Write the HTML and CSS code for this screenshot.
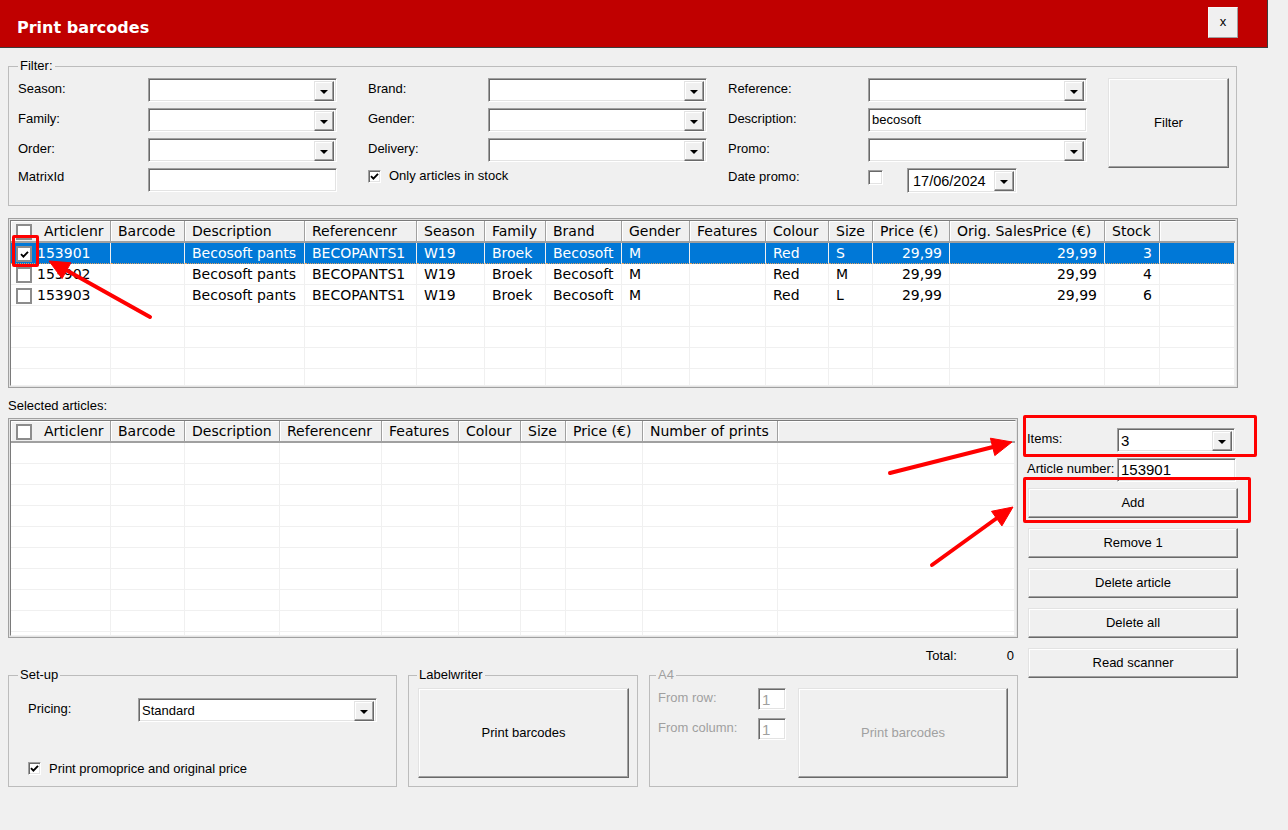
FILE: index.html
```html
<!DOCTYPE html>
<html lang="en">
<head>
<meta charset="utf-8">
<title>Print barcodes</title>
<link rel="stylesheet" href="styles.css">
</head>
<body>
<div class="window">
  <header class="titlebar">
    <h1 class="title">Print barcodes</h1>
    <button class="close" type="button">x</button>
  </header>

  <main class="content">
    <fieldset class="group filter">
      <legend>Filter:</legend>
      <div class="filter-grid">
        <button class="btn filter-btn" type="button">Filter</button>

        <span class="lbl c1">Season:</span>
        <div class="combo c2"><span class="val"></span><span class="drop"><i></i></span></div>
        <span class="lbl c4">Brand:</span>
        <div class="combo c5"><span class="val"></span><span class="drop"><i></i></span></div>
        <span class="lbl c7">Reference:</span>
        <div class="combo c8"><span class="val"></span><span class="drop"><i></i></span></div>

        <span class="lbl c1">Family:</span>
        <div class="combo c2"><span class="val"></span><span class="drop"><i></i></span></div>
        <span class="lbl c4">Gender:</span>
        <div class="combo c5"><span class="val"></span><span class="drop"><i></i></span></div>
        <span class="lbl c7">Description:</span>
        <div class="textbox c8">becosoft</div>

        <span class="lbl c1">Order:</span>
        <div class="combo c2"><span class="val"></span><span class="drop"><i></i></span></div>
        <span class="lbl c4">Delivery:</span>
        <div class="combo c5"><span class="val"></span><span class="drop"><i></i></span></div>
        <span class="lbl c7">Promo:</span>
        <div class="combo c8"><span class="val"></span><span class="drop"><i></i></span></div>

        <span class="lbl c1 low">MatrixId</span>
        <div class="textbox c2"></div>
        <label class="check-line c4 span3"><span class="chk"><svg viewBox="0 0 9 9" width="9" height="9"><polyline points="1,4.2 3.4,6.6 8,1.8" /></svg></span><span class="check-text">Only articles in stock</span></label>
        <span class="lbl c7 low">Date promo:</span>
        <div class="date-line c8">
          <span class="chk chk-empty"></span>
          <div class="datepicker"><span class="val">17/06/2024</span><span class="drop"><i></i></span></div>
        </div>
      </div>
    </fieldset>

    <div class="grid grid-articles">
      <div class="grid-inner">
        <div class="row head">
          <div class="hcell first"><span class="gchk"></span><span>Articlenr</span></div>
          <div class="hcell">Barcode</div>
          <div class="hcell">Description</div>
          <div class="hcell">Referencenr</div>
          <div class="hcell">Season</div>
          <div class="hcell">Family</div>
          <div class="hcell">Brand</div>
          <div class="hcell">Gender</div>
          <div class="hcell">Features</div>
          <div class="hcell">Colour</div>
          <div class="hcell">Size</div>
          <div class="hcell">Price (€)</div>
          <div class="hcell">Orig. SalesPrice (€)</div>
          <div class="hcell">Stock</div>
          <div class="hcell filler"></div>
        </div>
        <div class="row sel">
          <div class="cell first"><span class="gchk"><svg viewBox="0 0 9 9" width="9" height="9"><polyline points="1,4.2 3.4,6.6 8,1.8" /></svg></span><span>153901</span></div>
          <div class="cell"></div>
          <div class="cell">Becosoft pants</div>
          <div class="cell">BECOPANTS1</div>
          <div class="cell">W19</div>
          <div class="cell">Broek</div>
          <div class="cell">Becosoft</div>
          <div class="cell">M</div>
          <div class="cell"></div>
          <div class="cell">Red</div>
          <div class="cell">S</div>
          <div class="cell num">29,99</div>
          <div class="cell num">29,99</div>
          <div class="cell num">3</div>
          <div class="cell"></div>
        </div>
        <div class="row">
          <div class="cell first"><span class="gchk"></span><span>153902</span></div>
          <div class="cell"></div>
          <div class="cell">Becosoft pants</div>
          <div class="cell">BECOPANTS1</div>
          <div class="cell">W19</div>
          <div class="cell">Broek</div>
          <div class="cell">Becosoft</div>
          <div class="cell">M</div>
          <div class="cell"></div>
          <div class="cell">Red</div>
          <div class="cell">M</div>
          <div class="cell num">29,99</div>
          <div class="cell num">29,99</div>
          <div class="cell num">4</div>
          <div class="cell"></div>
        </div>
        <div class="row">
          <div class="cell first"><span class="gchk"></span><span>153903</span></div>
          <div class="cell"></div>
          <div class="cell">Becosoft pants</div>
          <div class="cell">BECOPANTS1</div>
          <div class="cell">W19</div>
          <div class="cell">Broek</div>
          <div class="cell">Becosoft</div>
          <div class="cell">M</div>
          <div class="cell"></div>
          <div class="cell">Red</div>
          <div class="cell">L</div>
          <div class="cell num">29,99</div>
          <div class="cell num">29,99</div>
          <div class="cell num">6</div>
          <div class="cell"></div>
        </div>
        <div class="row"><div class="cell"></div><div class="cell"></div><div class="cell"></div><div class="cell"></div><div class="cell"></div><div class="cell"></div><div class="cell"></div><div class="cell"></div><div class="cell"></div><div class="cell"></div><div class="cell"></div><div class="cell"></div><div class="cell"></div><div class="cell"></div><div class="cell"></div></div>
        <div class="row"><div class="cell"></div><div class="cell"></div><div class="cell"></div><div class="cell"></div><div class="cell"></div><div class="cell"></div><div class="cell"></div><div class="cell"></div><div class="cell"></div><div class="cell"></div><div class="cell"></div><div class="cell"></div><div class="cell"></div><div class="cell"></div><div class="cell"></div></div>
        <div class="row"><div class="cell"></div><div class="cell"></div><div class="cell"></div><div class="cell"></div><div class="cell"></div><div class="cell"></div><div class="cell"></div><div class="cell"></div><div class="cell"></div><div class="cell"></div><div class="cell"></div><div class="cell"></div><div class="cell"></div><div class="cell"></div><div class="cell"></div></div>
        <div class="row"><div class="cell"></div><div class="cell"></div><div class="cell"></div><div class="cell"></div><div class="cell"></div><div class="cell"></div><div class="cell"></div><div class="cell"></div><div class="cell"></div><div class="cell"></div><div class="cell"></div><div class="cell"></div><div class="cell"></div><div class="cell"></div><div class="cell"></div></div>
      </div>
    </div>

    <div class="lower">
      <div class="lower-left">
        <div class="sel-label">Selected articles:</div>
        <div class="grid grid-selected">
          <div class="grid-inner">
            <div class="row head">
              <div class="hcell first"><span class="gchk"></span><span>Articlenr</span></div>
              <div class="hcell">Barcode</div>
              <div class="hcell">Description</div>
              <div class="hcell">Referencenr</div>
              <div class="hcell">Features</div>
              <div class="hcell">Colour</div>
              <div class="hcell">Size</div>
              <div class="hcell">Price (€)</div>
              <div class="hcell">Number of prints</div>
              <div class="hcell filler"></div>
            </div>
            <div class="row"><div class="cell"></div><div class="cell"></div><div class="cell"></div><div class="cell"></div><div class="cell"></div><div class="cell"></div><div class="cell"></div><div class="cell"></div><div class="cell"></div><div class="cell"></div></div>
            <div class="row"><div class="cell"></div><div class="cell"></div><div class="cell"></div><div class="cell"></div><div class="cell"></div><div class="cell"></div><div class="cell"></div><div class="cell"></div><div class="cell"></div><div class="cell"></div></div>
            <div class="row"><div class="cell"></div><div class="cell"></div><div class="cell"></div><div class="cell"></div><div class="cell"></div><div class="cell"></div><div class="cell"></div><div class="cell"></div><div class="cell"></div><div class="cell"></div></div>
            <div class="row"><div class="cell"></div><div class="cell"></div><div class="cell"></div><div class="cell"></div><div class="cell"></div><div class="cell"></div><div class="cell"></div><div class="cell"></div><div class="cell"></div><div class="cell"></div></div>
            <div class="row"><div class="cell"></div><div class="cell"></div><div class="cell"></div><div class="cell"></div><div class="cell"></div><div class="cell"></div><div class="cell"></div><div class="cell"></div><div class="cell"></div><div class="cell"></div></div>
            <div class="row"><div class="cell"></div><div class="cell"></div><div class="cell"></div><div class="cell"></div><div class="cell"></div><div class="cell"></div><div class="cell"></div><div class="cell"></div><div class="cell"></div><div class="cell"></div></div>
            <div class="row"><div class="cell"></div><div class="cell"></div><div class="cell"></div><div class="cell"></div><div class="cell"></div><div class="cell"></div><div class="cell"></div><div class="cell"></div><div class="cell"></div><div class="cell"></div></div>
            <div class="row"><div class="cell"></div><div class="cell"></div><div class="cell"></div><div class="cell"></div><div class="cell"></div><div class="cell"></div><div class="cell"></div><div class="cell"></div><div class="cell"></div><div class="cell"></div></div>
            <div class="row"><div class="cell"></div><div class="cell"></div><div class="cell"></div><div class="cell"></div><div class="cell"></div><div class="cell"></div><div class="cell"></div><div class="cell"></div><div class="cell"></div><div class="cell"></div></div>
            <div class="row"><div class="cell"></div><div class="cell"></div><div class="cell"></div><div class="cell"></div><div class="cell"></div><div class="cell"></div><div class="cell"></div><div class="cell"></div><div class="cell"></div><div class="cell"></div></div>
          </div>
        </div>

        <div class="total-row"><span>Total:</span><span>0</span></div>

        <div class="groups">
          <fieldset class="group setup">
            <legend>Set-up</legend>
            <div class="setup-row">
              <span class="lbl pricing-lbl">Pricing:</span>
              <div class="combo pricing"><span class="val">Standard</span><span class="drop"><i></i></span></div>
            </div>
            <label class="check-line promo-check"><span class="chk"><svg viewBox="0 0 9 9" width="9" height="9"><polyline points="1,4.2 3.4,6.6 8,1.8" /></svg></span><span class="check-text">Print promoprice and original price</span></label>
          </fieldset>

          <fieldset class="group labelwriter">
            <legend>Labelwriter</legend>
            <button class="btn big" type="button">Print barcodes</button>
          </fieldset>

          <fieldset class="group a4" disabled>
            <legend>A4</legend>
            <div class="a4-body">
              <div class="a4-fields">
                <div class="a4-row"><span class="lbl">From row:</span><span class="smallbox">1</span></div>
                <div class="a4-row"><span class="lbl">From column:</span><span class="smallbox">1</span></div>
              </div>
              <button class="btn big off" type="button">Print barcodes</button>
            </div>
          </fieldset>
        </div>
      </div>

      <aside class="lower-right">
        <div class="field-row"><span class="lbl side-lbl">Items:</span><div class="combo items-combo"><span class="val">3</span><span class="drop"><i></i></span></div></div>
        <div class="field-row"><span class="lbl side-lbl">Article number:</span><div class="textbox art-input">153901</div></div>
        <button class="btn side" type="button">Add</button>
        <button class="btn side" type="button">Remove 1</button>
        <button class="btn side" type="button">Delete article</button>
        <button class="btn side" type="button">Delete all</button>
        <button class="btn side" type="button">Read scanner</button>
      </aside>
    </div>
  </main>

  <div class="mark mark-check"></div>
  <div class="mark mark-items"></div>
  <div class="mark mark-add"></div>
  <svg class="arrows" width="1288" height="830" viewBox="0 0 1288 830">
    <g class="arrow">
      <line x1="150" y1="317" x2="66" y2="270" />
      <polygon points="49,261 70.9,262.8 62.1,278.6" />
    </g>
    <g class="arrow">
      <line x1="890" y1="473" x2="993" y2="447" />
      <polygon points="1012,442 994.8,455.6 990.4,438.2" />
    </g>
    <g class="arrow">
      <line x1="932" y1="565" x2="997" y2="518" />
      <polygon points="1013,507 1001.9,525.9 991.5,511.3" />
    </g>
  </svg>
</div>
</body>
</html>
```

FILE: styles.css
```css
* { box-sizing: border-box; }
html, body { margin: 0; padding: 0; }
body {
  background: #f0f0f0;
  width: 1288px;
  height: 830px;
  overflow: hidden;
  font-family: "Liberation Sans", Arial, sans-serif;
  font-size: 13px;
  line-height: 16px;
  color: #000;
}
.window { position: relative; width: 1288px; height: 830px; }

/* title bar */
.titlebar {
  display: flex;
  justify-content: space-between;
  align-items: flex-start;
  width: 1268px;
  height: 48px;
  background: #c00000;
  border-right: 1px solid #3c3c3c;
  border-bottom: 1px solid #3c3c3c;
  padding: 0 29px 0 17px;
}
.title {
  margin: 18px 0 0;
  font-family: "DejaVu Sans", sans-serif;
  font-weight: bold;
  font-size: 16px;
  line-height: 20px;
  color: #fff;
}
.close {
  margin-top: 7px;
  width: 30px;
  height: 31px;
  padding: 0 0 3px;
  background: #f0f0f0;
  border: 1px solid;
  border-color: #f8f8f8 #a0a0a0 #a0a0a0 #f8f8f8;
  font-family: "Liberation Sans", sans-serif;
  font-size: 13px;
  color: #000;
}

.content { padding: 10px 0 0 8px; }

/* group boxes */
.group {
  margin: 0;
  min-width: 0;
  border: 1px solid #bcbcbc;
}
.group legend {
  margin-left: 0;
  padding: 0 2px;
  line-height: 16px;
  height: 16px;
}
.group[disabled] { color: #a0a0a0; }

.filter {
  width: 1229px;
  padding: 4px 7px 13px 9px;
}
.filter-grid {
  display: grid;
  grid-template-columns: 130px 189px 31px 120px 219px 21px 140px 219px 21px 121px;
  grid-template-rows: repeat(4, 24px);
  row-gap: 6px;
}
.c1 { grid-column: 1; }
.c2 { grid-column: 2; }
.c4 { grid-column: 4; }
.c5 { grid-column: 5; }
.c7 { grid-column: 7; }
.c8 { grid-column: 8; }
.span3 { grid-column: 4 / span 3; }
.filter-btn { grid-column: 10; grid-row: 1 / span 4; height: 90px; }

.lbl { padding-top: 3px; white-space: nowrap; }
.lbl.low { padding-top: 1px; }

/* combo / textbox */
.combo, .textbox, .datepicker, .smallbox {
  background: #fff;
  border: 1px solid;
  border-color: #a0a0a0 #fff #fff #a0a0a0;
  box-shadow: inset 1px 1px 0 #696969, inset -1px -1px 0 #e3e3e3;
}
.combo {
  display: flex;
  height: 24px;
  padding: 2px 2px 2px 3px;
}
.combo .val, .datepicker .val {
  flex: 1;
  line-height: 20px;
  white-space: nowrap;
  overflow: hidden;
}
.drop {
  width: 20px;
  height: 20px;
  display: flex;
  align-items: center;
  justify-content: center;
  background: #f0f0f0;
  border: 1px solid;
  border-color: #e3e3e3 #696969 #696969 #e3e3e3;
  box-shadow: inset -1px -1px 0 #a0a0a0, inset 1px 1px 0 #fff;
}
.drop i {
  width: 0;
  height: 0;
  margin-top: 1px;
  border-left: 4px solid transparent;
  border-right: 4px solid transparent;
  border-top: 4px solid #000;
}
.textbox {
  height: 24px;
  padding: 0 3px;
  line-height: 22px;
  white-space: nowrap;
}

/* checkboxes */
.check-line {
  display: flex;
  align-items: flex-start;
  gap: 8px;
  white-space: nowrap;
}
.chk {
  width: 13px;
  height: 13px;
  margin-top: 2px;
  flex: none;
  display: flex;
  align-items: center;
  justify-content: center;
  background: #fff;
  border: 1px solid;
  border-color: #a0a0a0 #fff #fff #a0a0a0;
  box-shadow: inset 1px 1px 0 #696969, inset -1px -1px 0 #e3e3e3;
}
.chk svg polyline, .gchk svg polyline {
  fill: none;
  stroke: #000;
  stroke-width: 1.9;
}
.chk-empty { width: 15px; height: 15px; }
.date-line { display: flex; align-items: flex-start; gap: 24px; }
.datepicker {
  display: flex;
  width: 110px;
  height: 25px;
  padding: 2px 2px 2px 5px;
  font-family: "Liberation Sans", sans-serif;
  font-size: 14.5px;
}
.datepicker .val { line-height: 21px; }

/* buttons */
.btn {
  padding: 0;
  font: inherit;
  color: #000;
  background: #f0f0f0;
  border: 1px solid;
  border-color: #e3e3e3 #696969 #696969 #e3e3e3;
  box-shadow: inset -1px -1px 0 #a0a0a0, inset 1px 1px 0 #fff;
}
.btn.off { color: #a0a0a0; }

/* data grids */
.grid {
  border: 1px solid #a0a0a0;
  padding: 1px;
  background: #e3e3e3;
}
.grid-inner {
  height: 100%;
  overflow: hidden;
  background: #fff;
  border: 1px solid;
  border-color: #7a7a7a #f0f0f0 #f0f0f0 #7a7a7a;
}
.grid-articles { width: 1230px; height: 170px; margin-top: 12px; }
.grid-selected { width: 1010px; height: 220px; }
.row {
  display: grid;
  height: 21px;
  font-family: "DejaVu Sans", sans-serif;
  font-size: 14px;
  line-height: 20px;
  color: #000;
}
.grid-articles .row {
  grid-template-columns: 100px 74px 120px 112px 68px 61px 76px 68px 76px 63px 44px 77px 155px 55px 75px;
}
.grid-selected .row {
  grid-template-columns: 100px 74px 95px 102px 77px 62px 45px 77px 135px 237px;
}
.row.head { height: 22px; }
.hcell {
  padding: 0 7px;
  background: #f0f0f0;
  border-right: 1px solid #a0a0a0;
  border-bottom: 2px solid #a0a0a0;
  box-shadow: inset 1px 1px 0 #fff;
  white-space: nowrap;
  overflow: hidden;
}
.hcell.filler { border-right: none; }
.cell {
  padding: 0 7px;
  border-right: 1px solid #f0f0f0;
  border-bottom: 1px solid #f0f0f0;
  white-space: nowrap;
  overflow: hidden;
}
.cell.num { text-align: right; }
.row.sel .cell {
  background: #0078d7;
  color: #fff;
  border-bottom: 1px dotted #e0a060;
}
.hcell.first, .cell.first {
  display: flex;
  align-items: center;
  padding-left: 5px;
  gap: 12px;
}
.cell.first { gap: 5px; }
.gchk {
  width: 16px;
  height: 16px;
  flex: none;
  display: flex;
  align-items: center;
  justify-content: center;
  background: #fff;
  border: 2px solid #8c8c8c;
}
.cell.first .gchk { margin-top: 2px; }
.hcell.first .gchk { margin-top: 2px; }

/* lower section */
.lower { display: flex; gap: 10px; margin-top: 10px; }
.lower-left { width: 1010px; }
.sel-label { height: 20px; }
.total-row {
  display: flex;
  justify-content: flex-end;
  gap: 50px;
  height: 29px;
  padding: 10px 4px 0 0;
}
.groups { display: flex; gap: 11px; }
.setup { width: 389px; padding: 15px 0 9px 19px; }
.setup legend { margin-left: -10px; }
.setup-row { display: flex; height: 24px; }
.pricing-lbl { width: 110px; }
.pricing { width: 239px; }
.promo-check { margin-top: 39px; height: 16px; }
.promo-check .chk { margin-top: 1px; }
.labelwriter { width: 230px; padding: 5px 9px 8px 9px; }
.labelwriter legend { margin-left: -1px; }
.btn.big { display: block; width: 211px; height: 90px; }
.a4 { width: 369px; padding: 5px 0 8px 8px; }
.a4 legend { margin-left: -2px; }
.a4-body { display: flex; gap: 12px; }
.a4-fields { width: 128px; display: flex; flex-direction: column; gap: 8px; }
.a4-row { display: flex; height: 22px; }
.a4-row .lbl { width: 100px; padding-top: 2px; }
.smallbox {
  width: 28px;
  height: 22px;
  padding: 0 3px;
  line-height: 21px;
  font-family: "Liberation Sans", sans-serif;
  font-size: 15px;
  color: #a0a0a0;
}
.a4 .btn.big { width: 210px; }

.lower-right {
  width: 210px;
  padding-top: 30px;
  display: flex;
  flex-direction: column;
}
.field-row { display: flex; height: 24px; margin-bottom: 6px; }
.side-lbl { width: 90px; margin-left: -1px; }
.items-combo { width: 118px; font-family: "Liberation Sans", sans-serif; font-size: 15px; }
.art-input { width: 119px; font-family: "Liberation Sans", sans-serif; font-size: 15px; }
.btn.side { height: 30px; margin-bottom: 10px; width: 210px; }

/* annotations */
.mark {
  position: absolute;
  border: 3px solid #ff0000;
  border-radius: 2px;
  pointer-events: none;
}
.mark-check { left: 12px; top: 235px; width: 27px; height: 32px; }
.mark-items { left: 1023px; top: 415px; width: 234px; height: 42px; }
.mark-add { left: 1023px; top: 477px; width: 228px; height: 46px; }
.arrows { position: absolute; left: 0; top: 0; pointer-events: none; }
.arrow line { stroke: #ff0000; stroke-width: 4; stroke-linecap: round; }
.arrow polygon { fill: #ff0000; stroke: #ff0000; stroke-width: 1; stroke-linejoin: round; }
```
